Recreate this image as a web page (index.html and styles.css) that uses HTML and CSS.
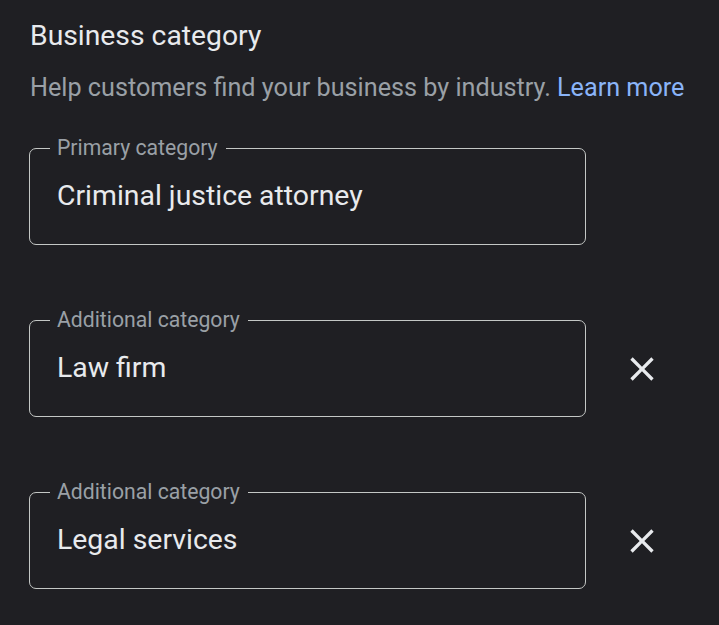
FILE: index.html
```html
<!DOCTYPE html>
<html>
<head>
<meta charset="utf-8">
<link rel="stylesheet" href="styles.css">
</head>
<body>
<main class="section">
  <h1 class="title">Business category</h1>
  <p class="help">Help customers find your business by industry. <a class="link" href="#">Learn more</a></p>
  <div class="fields">
    <div class="row">
      <fieldset class="field">
        <legend class="label">Primary category</legend>
        <div class="value">Criminal justice attorney</div>
      </fieldset>
    </div>
    <div class="row">
      <fieldset class="field">
        <legend class="label">Additional category</legend>
        <div class="value">Law firm</div>
      </fieldset>
      <button class="remove" aria-label="Remove">
        <svg class="remove-icon" viewBox="0 0 24 24"><path d="M19 6.41 17.59 5 12 10.59 6.41 5 5 6.41 10.59 12 5 17.59 6.41 19 12 13.41 17.59 19 19 17.59 13.41 12z" fill="#e8eaed"/></svg>
      </button>
    </div>
    <div class="row">
      <fieldset class="field">
        <legend class="label">Additional category</legend>
        <div class="value">Legal services</div>
      </fieldset>
      <button class="remove" aria-label="Remove">
        <svg class="remove-icon" viewBox="0 0 24 24"><path d="M19 6.41 17.59 5 12 10.59 6.41 5 5 6.41 10.59 12 5 17.59 6.41 19 12 13.41 17.59 19 19 17.59 13.41 12z" fill="#e8eaed"/></svg>
      </button>
    </div>
  </div>
</main>
</body>
</html>
```

FILE: styles.css
```css
html, body {
  margin: 0;
  padding: 0;
  background: #1f1f23;
  font-family: Roboto, "Noto Sans", Arial, sans-serif;
}

.section {
  padding: 20px 30px 0 30px;
}

.title {
  margin: 0;
  font-size: 28.3px;
  font-weight: 400;
  color: #e8eaed;
  line-height: 32px;
}

.help {
  margin: 20px 0 0 0;
  font-size: 25.2px;
  line-height: 32px;
  color: #9aa0a6;
}

.link {
  color: #8ab4f8;
  text-decoration: none;
}

.fields {
  display: flex;
  flex-direction: column;
  gap: 63px;
  margin-top: 32px;
}

.row {
  display: flex;
  align-items: center;
  gap: 32px;
}

.field {
  margin: 0 0 0 -1px;
  width: 557px;
  box-sizing: border-box;
  height: 109px;
  border: 1px solid #c4c7c5;
  border-radius: 7px;
  padding: 0 0 0 20px;
  min-width: 0;
}

.label {
  padding: 0 8px 0 7px;
  font-size: 21.2px;
  line-height: 24px;
  color: #9aa0a6;
}

.value {
  font-size: 28.4px;
  line-height: 32px;
  color: #e8eaed;
  margin: 20px 0 0 7px;
}

.remove {
  background: none;
  border: 0;
  padding: 0;
  width: 48px;
  height: 48px;
  display: flex;
  align-items: center;
  justify-content: center;
  margin-top: 12px;
}

.remove-icon {
  width: 40px;
  height: 40px;
  flex: none;
}
```
